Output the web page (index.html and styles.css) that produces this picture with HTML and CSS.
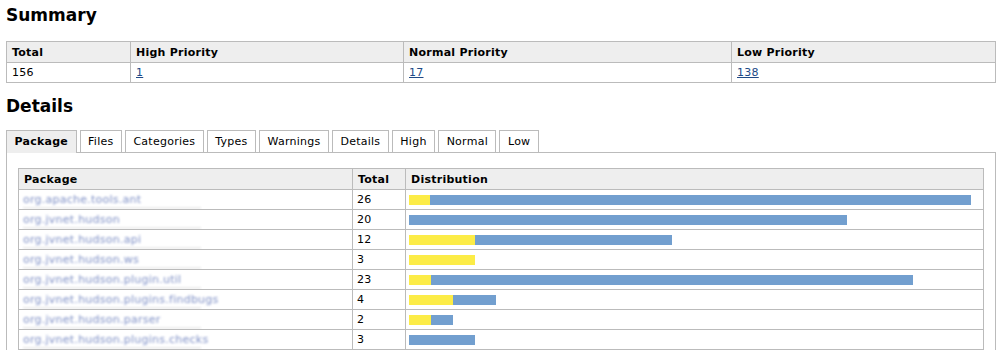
FILE: index.html
```html
<!DOCTYPE html>
<html>
<head>
<meta charset="utf-8">
<title>Summary</title>
<link rel="stylesheet" href="styles.css">
</head>
<body>
<h2 class="heading heading-first">Summary</h2>
<table class="grid summary">
  <colgroup>
    <col class="c-total"><col class="c-high"><col class="c-normal"><col>
  </colgroup>
  <thead>
    <tr><th>Total</th><th>High Priority</th><th>Normal Priority</th><th>Low Priority</th></tr>
  </thead>
  <tbody>
    <tr><td>156</td><td><a href="#">1</a></td><td><a href="#">17</a></td><td><a href="#">138</a></td></tr>
  </tbody>
</table>

<h2 class="heading heading-second">Details</h2>
<ul class="tabs">
  <li class="tab active">Package</li>
  <li class="tab">Files</li>
  <li class="tab">Categories</li>
  <li class="tab">Types</li>
  <li class="tab">Warnings</li>
  <li class="tab">Details</li>
  <li class="tab">High</li>
  <li class="tab">Normal</li>
  <li class="tab">Low</li>
</ul>
<div class="panel">
  <table class="grid details">
    <colgroup>
      <col class="c-pkg"><col class="c-count"><col>
    </colgroup>
    <thead>
      <tr><th>Package</th><th>Total</th><th>Distribution</th></tr>
    </thead>
    <tbody>
      <tr><td><span class="pkg">org.apache.tools.ant</span></td><td>26</td><td><div class="bar"><span class="hi" style="width:21px"></span><span class="lo" style="width:541px"></span></div></td></tr>
      <tr><td><span class="pkg">org.jvnet.hudson</span></td><td>20</td><td><div class="bar"><span class="lo" style="width:438px"></span></div></td></tr>
      <tr><td><span class="pkg">org.jvnet.hudson.api</span></td><td>12</td><td><div class="bar"><span class="hi" style="width:66px"></span><span class="lo" style="width:197px"></span></div></td></tr>
      <tr><td><span class="pkg">org.jvnet.hudson.ws</span></td><td>3</td><td><div class="bar"><span class="hi" style="width:66px"></span></div></td></tr>
      <tr><td><span class="pkg">org.jvnet.hudson.plugin.util</span></td><td>23</td><td><div class="bar"><span class="hi" style="width:22px"></span><span class="lo" style="width:482px"></span></div></td></tr>
      <tr><td><span class="pkg">org.jvnet.hudson.plugins.findbugs</span></td><td>4</td><td><div class="bar"><span class="hi" style="width:44px"></span><span class="lo" style="width:43px"></span></div></td></tr>
      <tr><td><span class="pkg">org.jvnet.hudson.parser</span></td><td>2</td><td><div class="bar"><span class="hi" style="width:22px"></span><span class="lo" style="width:22px"></span></div></td></tr>
      <tr><td><span class="pkg">org.jvnet.hudson.plugins.checks</span></td><td>3</td><td><div class="bar"><span class="lo" style="width:66px"></span></div></td></tr>
    </tbody>
  </table>
</div>
</body>
</html>
```

FILE: styles.css
```css
html, body {
  background: #fff;
}

body {
  margin: 0;
  padding: 0 5px 0 6px;
  font-family: "DejaVu Sans", Verdana, sans-serif;
  font-size: 11px;
  letter-spacing: 0.25px;
  color: #000;
}

a {
  color: #204a87;
  text-decoration: underline;
}

.heading {
  font-size: 17px;
  line-height: 20px;
  font-weight: bold;
  letter-spacing: 0;
  margin: 0;
}

.heading-first {
  margin: 5px 0 16px;
}

.heading-second {
  margin: 13px 0 14px;
}

.grid {
  width: 100%;
  border-collapse: collapse;
  table-layout: fixed;
  border: 1px solid #bbb;
}

.grid th,
.grid td {
  border: 1px solid #bbb;
  padding: 0 5px;
  text-align: left;
  white-space: nowrap;
  overflow: hidden;
}

.grid th {
  background: #eee;
  font-weight: bold;
  line-height: 19px;
  padding-top: 1px;
}

.grid td {
  line-height: 19px;
}

.summary .c-total { width: 124px; }
.summary .c-high { width: 273px; }
.summary .c-normal { width: 328px; }

.tabs {
  list-style: none;
  margin: 0;
  padding: 0;
  display: flex;
  gap: 3px;
}

.tab {
  border: 1px solid #bbb;
  border-bottom: none;
  background: #fff;
  padding: 0 7.5px;
  line-height: 21px;
}

.tab.active {
  position: relative;
  background: #eee;
  font-weight: bold;
  margin-bottom: -1px;
  padding-bottom: 1px;
}

.panel {
  border: 1px solid #bbb;
  padding: 15px 11px;
}

.details .c-pkg { width: 334px; }
.details .c-count { width: 53px; }

.details td:first-child {
  padding-left: 4px;
}

.details td:nth-child(2) {
  padding-left: 4px;
}

.details td:nth-child(3) {
  padding-left: 3px;
  vertical-align: middle;
}

.pkg {
  display: inline-block;
  width: 178px;
  color: #7f90c6;
  line-height: 15px;
  filter: blur(1.2px);
  border-bottom: 2px solid #ececec;
  vertical-align: top;
  margin-top: 2px;
}

.bar {
  display: flex;
  height: 10px;
}

.bar .hi {
  background: #fcec47;
}

.bar .lo {
  background: #729fcf;
}
```
